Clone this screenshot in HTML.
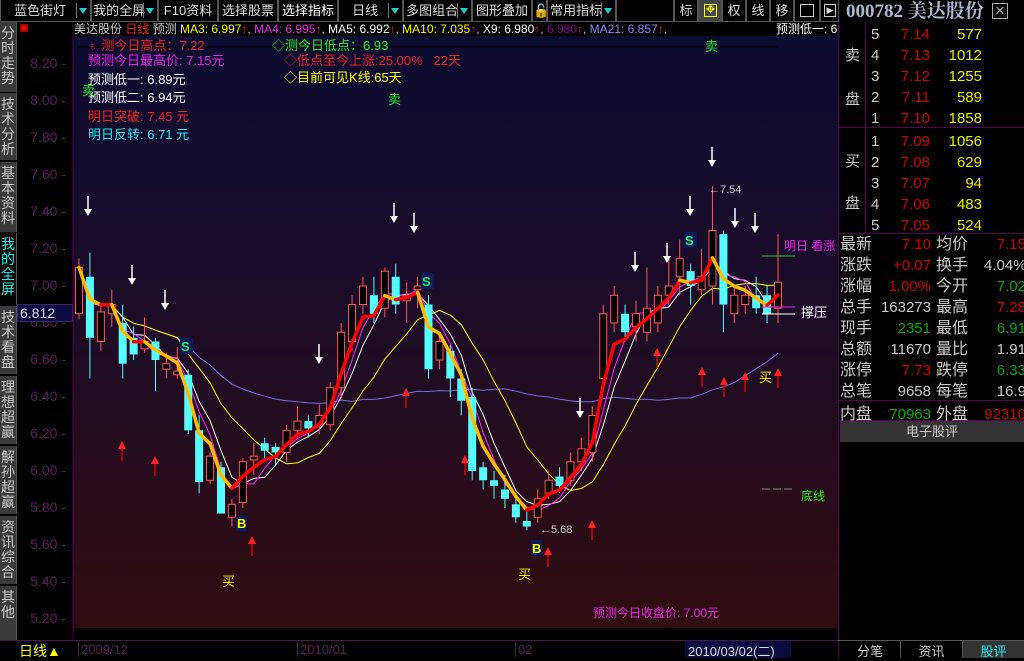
<!DOCTYPE html>
<html><head><meta charset="utf-8">
<style>
*{margin:0;padding:0;box-sizing:border-box}
body{width:1024px;height:658px;background:#000;overflow:hidden;position:relative;font-family:"Liberation Sans","WenQuanYi Zen Hei",sans-serif;font-size:13px;color:#ccc}
.abs{position:absolute}
.tb{position:absolute;top:0;height:22px;border:1px solid #555;border-top:none;background:#000;color:#ddd;font-size:13px;line-height:21px;text-align:center;white-space:nowrap}
.dd{position:absolute;right:2px;top:3px;width:12px;height:15px;border-left:1px solid #777}
.dd:after{content:"";position:absolute;left:2px;top:5px;border-left:4px solid transparent;border-right:4px solid transparent;border-top:6px solid #2cc}
.tab{position:absolute;left:0;width:17px;background:#3a3a3a;border-right:1px solid #555;color:#ccc;font-size:14px;line-height:15px;text-align:center;padding-top:4px}
.ax{position:absolute;left:30px;width:36px;text-align:right;color:#5c1b5c;font-size:14px}
.ob{position:absolute;left:838px;width:186px;height:21px;font-size:15px;line-height:21px}
.ob span{position:absolute}
.it{position:absolute;font-size:13px}
</style></head><body>
<div class="tb" style="left:0;width:91px">蓝色街灯&nbsp;&nbsp;&nbsp;<div class="dd"></div></div>
<div class="tb" style="left:91px;width:67px">我的全屏&nbsp;&nbsp;&nbsp;<div class="dd"></div></div>
<div class="tb" style="left:158px;width:60px">F10资料</div>
<div class="tb" style="left:218px;width:60px">选择股票</div>
<div class="tb" style="left:278px;width:60px;color:#fff">选择指标</div>
<div class="tb" style="left:338px;width:65px">日线&nbsp;&nbsp;&nbsp;<div class="dd"></div></div>
<div class="tb" style="left:403px;width:69px">多图组合&nbsp;&nbsp;&nbsp;<div class="dd"></div></div>
<div class="tb" style="left:472px;width:60px">图形叠加</div>
<div class="tb" style="left:532px;width:15px">&#128275;</div>
<div class="tb" style="left:547px;width:69px">常用指标&nbsp;&nbsp;&nbsp;<div class="dd"></div></div>
<div class="tb" style="left:616px;width:58px"></div>
<div class="tb" style="left:674px;width:24px">标</div>
<div class="tb" style="left:698px;width:24px;background:#444"><div style="position:absolute;left:5px;top:4px;width:13px;height:13px;border:1px solid #ff0;color:#ff0;font-size:11px;line-height:11px">✥</div></div>
<div class="tb" style="left:722px;width:24px">权</div>
<div class="tb" style="left:746px;width:24px">线</div>
<div class="tb" style="left:770px;width:24px">移</div>
<div class="tb" style="left:794px;width:26px"><div style="position:absolute;left:5px;top:4px;width:14px;height:13px;border:1px solid #ccc"></div></div>
<div class="tb" style="left:820px;width:19px"><div style="position:absolute;left:3px;top:4px;width:12px;height:13px;border:1px solid #ccc;font-size:9px;line-height:11px">▶</div></div>
<div class="abs" style="left:846px;top:0;font-family:'Liberation Serif','Noto Serif CJK SC',serif;font-size:19px;font-weight:bold;color:#aab8d0;line-height:24px">000782 美达股份</div>
<div class="abs" style="left:992px;top:3px;width:16px;height:16px;border:1px solid #aaa;color:#aaa;font-size:13px;line-height:14px;text-align:center">✕</div>

<div class="tab" style="top:22px;height:70px">分时走势</div>
<div class="tab" style="top:93px;height:67px">技术分析</div>
<div class="tab" style="top:162px;height:70px">基本资料</div>
<div class="tab" style="top:233px;height:72px;background:#000;color:#2ee">我的全屏</div>
<div class="tab" style="top:306px;height:68px">技术看盘</div>
<div class="tab" style="top:376px;height:68px">理想超赢</div>
<div class="tab" style="top:446px;height:68px">解孙超赢</div>
<div class="tab" style="top:516px;height:68px">资讯综合</div>
<div class="tab" style="top:586px;height:54px">其他</div>
<div class="abs" style="left:20px;top:24px;width:8px;height:8px;background:#f00;border:2px solid #a00"></div>

<div id="axis"></div>
<div class="abs" style="left:17px;top:304px;width:56px;height:18px;background:#0c0c40;border:1px solid #3a2a6a;color:#ddd;font-size:14px;line-height:16px;padding-left:2px">6.812</div>

<svg id="ch" class="abs" style="left:0;top:0" width="838" height="658"></svg>

<div class="abs" style="left:74px;top:22px;width:764px;height:14px;background:#000;font-size:12px;line-height:14px;white-space:nowrap;overflow:hidden;color:#ccc">美达股份 <span style="color:#e22">日线</span> 预测 <span style="color:#ff0">MA3: 6.997</span><span style="color:#e22">↑</span>, <span style="color:#e2e">MA4: 6.995</span><span style="color:#e22">↑</span>, <span style="color:#fff">MA5: 6.992</span><span style="color:#e22">↑</span>, <span style="color:#ff0">MA10: 7.035</span><span style="color:#e22">↑</span>, <span style="color:#fff">X9: 6.980</span><span style="color:#e22">↑</span>, <span style="color:#808">6.980</span><span style="color:#e22">↑</span>, <span style="color:#88f">MA21: 6.857</span><span style="color:#e22">↑</span>,<span style="position:absolute;left:702px;color:#fff;background:#000">预测低一: 6</span></div>

<div class="it" style="left:88px;top:35px;color:#e22">♁ 测今日高点：7.22</div>
<div class="it" style="left:272px;top:35px;color:#2e2">◇测今日低点：6.93</div>
<div class="it" style="left:88px;top:50px;color:#e2e">预测今日最高价: 7.15元</div>
<div class="it" style="left:284px;top:50px;color:#e22">◇低点至今上涨:25.00%&nbsp;&nbsp;&nbsp;22天</div>
<div class="it" style="left:284px;top:67px;color:#ff0">◇目前可见K线:65天</div>
<div class="it" style="left:88px;top:69px;color:#fff">预测低一: 6.89元</div>
<div class="it" style="left:88px;top:87px;color:#fff">预测低二: 6.94元</div>
<div class="it" style="left:88px;top:106px;color:#e22">明日突破: 7.45 元</div>
<div class="it" style="left:88px;top:124px;color:#2ee">明日反转: 6.71 元</div>
<div class="abs" style="left:82px;top:80px;color:#2e2;font-size:13px">卖</div>
<div class="abs" style="left:388px;top:89px;color:#2e2;font-size:13px">卖</div>
<div class="abs" style="left:705px;top:36px;color:#2e2;font-size:13px">卖</div>
<div class="abs" style="left:222px;top:571px;color:#ff0;font-size:13px">买</div>
<div class="abs" style="left:518px;top:564px;color:#ff0;font-size:13px">买</div>
<div class="abs" style="left:759px;top:367px;color:#ff0;font-size:13px">买</div>
<div class="abs" style="left:784px;top:237px;color:#e2e;font-size:12px">明日 看涨</div>
<div class="abs" style="left:801px;top:302px;color:#fff;font-size:13px">撑压</div>
<div class="abs" style="left:801px;top:487px;color:#2e2;font-size:12px">底线</div>
<div class="abs" style="left:593px;top:604px;color:#e2e;font-size:12px">预测今日收盘价: 7.00元</div>
<div class="abs" style="left:709px;top:184px;color:#ccc;font-size:11px">←7.54</div>
<div class="abs" style="left:540px;top:524px;color:#ccc;font-size:11px">←5.68</div>

<div class="abs" style="left:0;top:640px;width:838px;height:18px;background:#000;border-top:1px solid #4a1a4a"></div>
<div class="abs" style="left:19px;top:641px;color:#ff0;font-size:14px">日线▲</div>
<div class="abs" style="left:78px;top:642px;color:#5c1b5c;font-size:13px;border-left:1px solid #4a1a4a;padding-left:2px">2009/12</div>
<div class="abs" style="left:297px;top:642px;color:#5c1b5c;font-size:13px;border-left:1px solid #4a1a4a;padding-left:2px">2010/01</div>
<div class="abs" style="left:515px;top:642px;color:#5c1b5c;font-size:13px;border-left:1px solid #4a1a4a;padding-left:2px">02</div>
<div class="abs" style="left:685px;top:641px;width:106px;height:17px;background:#0c0c40;color:#ddd;font-size:13px;padding-left:3px">2010/03/02(二)</div>

<div class="abs" style="left:838px;top:22px;width:1px;height:636px;background:#505"></div>
<div class="abs" style="left:865px;top:22px;width:1px;height:212px;background:#505"></div>
<div class="abs" style="left:838px;top:127px;width:186px;height:1px;background:#505"></div>
<div class="abs" style="left:838px;top:233px;width:186px;height:1px;background:#505"></div>
<div class="abs" style="left:838px;top:400px;width:186px;height:1px;background:#505"></div>
<div class="abs" style="left:838px;top:420px;width:186px;height:1px;background:#505"></div>
<div class="abs" style="left:845px;top:44px;font-size:15px;color:#ccc">卖</div>
<div class="abs" style="left:845px;top:88px;font-size:15px;color:#ccc">盘</div>
<div class="abs" style="left:845px;top:150px;font-size:15px;color:#ccc">买</div>
<div class="abs" style="left:845px;top:192px;font-size:15px;color:#ccc">盘</div>
<div id="book"></div>
<div id="stats"></div>
<div class="abs" style="left:840px;top:421px;width:184px;height:21px;background:#333;color:#ccc;text-align:center;line-height:21px;font-size:13px">电子股评</div>
<div class="abs" style="left:838px;top:640px;width:186px;height:18px;border-top:1px solid #555"></div>
<div class="abs" style="left:840px;top:641px;width:61px;height:17px;color:#ccc;text-align:center;border-right:1px solid #555">分笔</div>
<div class="abs" style="left:901px;top:641px;width:62px;height:17px;color:#ccc;text-align:center;border-right:1px solid #555">资讯</div>
<div class="abs" style="left:963px;top:641px;width:61px;height:17px;color:#2ee;text-align:center;background:#333">股评</div>

<script>
var ax='';var labs=['8.20','8.00','7.80','7.60','7.40','7.20','7.00','6.80','6.60','6.40','6.20','6.00','5.80','5.60','5.40','5.20'];
function Y(p){return 64+(8.2-p)/0.2*37;}
labs.forEach(function(l){var y=Y(parseFloat(l));ax+='<div class="ax" style="top:'+(y-9)+'px">'+l+' -</div>';});
document.getElementById('axis').innerHTML=ax;
var D=[[6.85,7.10,7.15,6.82],[7.05,6.72,7.18,6.50],[6.70,6.86,6.90,6.65],[6.85,6.90,6.98,6.78],[6.80,6.58,6.90,6.50],[6.72,6.63,6.78,6.60],[6.66,6.70,6.83,6.64],[6.70,6.60,6.72,6.43],[6.55,6.58,6.64,6.50],[6.52,6.54,6.67,6.50],[6.52,6.22,6.55,6.20],[6.22,5.94,6.30,5.88],[5.95,6.08,6.10,5.93],[6.02,5.77,6.05,5.77],[5.75,5.82,5.85,5.70],[5.83,6.05,6.07,5.80],[6.06,6.08,6.15,5.98],[6.15,6.11,6.18,6.06],[6.13,6.10,6.15,6.03],[6.10,6.22,6.25,6.05],[6.22,6.27,6.35,6.18],[6.27,6.23,6.30,6.18],[6.25,6.30,6.36,6.20],[6.25,6.45,6.48,6.22],[6.45,6.75,6.80,6.40],[6.70,6.90,6.95,6.65],[6.90,7.00,7.05,6.85],[6.95,6.85,7.05,6.80],[6.88,7.08,7.10,6.83],[7.05,6.90,7.12,6.85],[6.92,6.95,7.02,6.80],[6.98,7.00,7.05,6.88],[6.90,6.55,6.95,6.50],[6.60,6.70,6.75,6.55],[6.65,6.50,6.68,6.40],[6.50,6.38,6.55,6.30],[6.40,6.00,6.45,5.95],[6.02,5.95,6.05,5.90],[5.95,5.92,6.00,5.85],[5.90,5.85,5.98,5.80],[5.82,5.75,5.88,5.72],[5.73,5.70,5.78,5.68],[5.75,5.85,5.90,5.72],[5.88,5.95,6.00,5.85],[5.97,5.92,6.02,5.88],[5.95,6.05,6.10,5.92],[6.05,6.12,6.18,6.00],[6.10,6.30,6.35,6.05],[6.50,6.85,6.90,6.45],[6.80,6.95,7.00,6.75],[6.85,6.75,6.90,6.70],[6.78,6.85,6.92,6.70],[6.75,6.88,7.10,6.70],[6.80,6.95,7.00,6.75],[6.95,7.00,7.15,6.90],[7.05,7.15,7.25,6.95],[7.08,7.00,7.12,6.90],[6.98,7.05,7.20,6.95],[7.00,7.30,7.54,6.90],[7.28,6.90,7.30,6.75],[6.85,6.95,7.00,6.80],[6.90,6.95,7.00,6.85],[6.95,6.88,7.05,6.85],[6.95,6.85,7.00,6.80],[6.88,7.02,7.28,6.80]];
var n=D.length,sp=(778-79)/(n-1);function X(i){return 79+i*sp;}
var s='<defs><linearGradient id="g" x1="0" y1="0" x2="0" y2="1"><stop offset="0" stop-color="#0c0b30"/><stop offset="0.45" stop-color="#1c0c28"/><stop offset="1" stop-color="#300c10"/></linearGradient></defs>';
s+='<rect x="73" y="36" width="765" height="592" fill="url(#g)"/>';
s+='<line x1="73" y1="36" x2="73" y2="640" stroke="#505" />';
s+='<line x1="78" y1="47" x2="778" y2="47" stroke="#000"/>';
var C=D.map(function(d){return d[1]});
function ma(k){return C.map(function(c,i){var a=0,m=0;for(var j=Math.max(0,i-k+1);j<=i;j++){a+=C[j];m++;}return a/m;});}
function poly(arr,col,w){var p='';for(var i=0;i<n;i++)p+=X(i).toFixed(1)+','+Y(arr[i]).toFixed(1)+' ';return '<polyline points="'+p+'" fill="none" stroke="'+col+'" stroke-width="'+w+'"/>';}
s+=poly(ma(25),'#7a6ae0',1);
s+=poly(ma(10),'#ff0',1);
s+=poly(ma(5),'#fff',1);
s+=poly(ma(4),'#f2f',1);
D.forEach(function(d,i){var x=X(i),o=d[0],c=d[1],h=d[2],l=d[3];var up=c>=o;var col=up?'#f55':'#5ff';
s+='<line x1="'+x+'" y1="'+Y(h)+'" x2="'+x+'" y2="'+Y(l)+'" stroke="'+col+'"/>';
var t=Y(Math.max(o,c)),b=Y(Math.min(o,c));if(b-t<2)b=t+2;
if(up)s+='<rect x="'+(x-3.5)+'" y="'+t+'" width="7" height="'+(b-t)+'" fill="#000" stroke="#f55"/>';
else s+='<rect x="'+(x-4)+'" y="'+t+'" width="8" height="'+(b-t)+'" fill="#5ff"/>';});
var e=[];C.forEach(function(c,i){e.push(i?e[i-1]*0.55+c*0.45:c);});
for(var i=1;i<n;i++){var col=e[i]>=e[i-1]?'#f00':'#fb0';s+='<line x1="'+X(i-1)+'" y1="'+Y(e[i-1])+'" x2="'+X(i)+'" y2="'+Y(e[i])+'" stroke="'+col+'" stroke-width="3.5" stroke-linecap="round"/>';}
function dn(x,y){return '<line x1="'+x+'" y1="'+y+'" x2="'+x+'" y2="'+(y+18)+'" stroke="#fff" stroke-width="1.5"/><path d="M'+(x-4)+' '+(y+13)+'L'+x+' '+(y+20)+'L'+(x+4)+' '+(y+13)+'Z" fill="#fff"/>';}
function upA(x,y){return '<line x1="'+x+'" y1="'+(y+4)+'" x2="'+x+'" y2="'+(y+20)+'" stroke="#d00" stroke-width="1.5"/><path d="M'+(x-4)+' '+(y+8)+'L'+x+' '+y+'L'+(x+4)+' '+(y+8)+'Z" fill="#f22"/>';}
[[88,196],[132,265],[165,290],[319,344],[394,203],[414,213],[580,398],[635,252],[667,243],[690,196],[712,147],[735,208],[755,213]].forEach(function(a){s+=dn(a[0],a[1]);});
[[122,441],[155,456],[252,536],[406,388],[465,455],[548,547],[592,520],[657,348],[702,367],[724,377],[745,372],[778,368]].forEach(function(a){s+=upA(a[0],a[1]);});
s+='<rect x="180" y="338" width="13" height="16" fill="#0a1a5a"/><text x="181" y="351" fill="#2e6" font-size="13" font-weight="bold" font-family="Liberation Sans">S</text>';
s+='<rect x="421" y="273" width="13" height="16" fill="#0a1a5a"/><text x="422" y="286" fill="#2e6" font-size="13" font-weight="bold" font-family="Liberation Sans">S</text>';
s+='<rect x="684" y="232" width="13" height="16" fill="#0a1a5a"/><text x="685" y="245" fill="#2e6" font-size="13" font-weight="bold" font-family="Liberation Sans">S</text>';
s+='<rect x="236" y="515" width="11" height="16" fill="#0a1a5a"/><text x="237" y="528" fill="#ff0" font-size="13" font-weight="bold" font-family="Liberation Sans">B</text>';
s+='<rect x="531" y="540" width="11" height="16" fill="#0a1a5a"/><text x="532" y="553" fill="#ff0" font-size="13" font-weight="bold" font-family="Liberation Sans">B</text>';
s+='<line x1="762" y1="256" x2="795" y2="256" stroke="#2c2"/><line x1="762" y1="307" x2="795" y2="307" stroke="#e2e"/><line x1="762" y1="314" x2="795" y2="314" stroke="#fff"/><line x1="762" y1="489" x2="795" y2="489" stroke="#888" stroke-dasharray="8,3"/>';
document.getElementById('ch').innerHTML=s;
var bk=[[5,'7.14','577'],[4,'7.13','1012'],[3,'7.12','1255'],[2,'7.11','589'],[1,'7.10','1858'],[1,'7.09','1056'],[2,'7.08','629'],[3,'7.07','94'],[4,'7.06','483'],[5,'7.05','524']];
var h='';bk.forEach(function(b,i){var t=24+i*21+(i>4?2:0);h+='<div class="ob" style="top:'+t+'px"><span style="left:33px;color:#ccc">'+b[0]+'</span><span style="right:94px;color:#c00">'+b[1]+'</span><span style="right:42px;color:#ee0">'+b[2]+'</span></div>';});
document.getElementById('book').innerHTML=h;
var st=[['最新','7.10','#c00','均价','7.15','#c00'],['涨跌','+0.07','#c00','换手','4.04%','#ccc'],['涨幅','1.00%','#c00','今开','7.02','#0a0'],['总手','163273','#ccc','最高','7.28','#c00'],['现手','2351','#0a0','最低','6.91','#0a0'],['总额','11670','#ccc','量比','1.91','#ccc'],['涨停','7.73','#c00','跌停','6.33','#0a0'],['总笔','9658','#ccc','每笔','16.9','#ccc'],['内盘','70963','#0a0','外盘','92310','#c00']];
h='';st.forEach(function(r,i){var t=234+i*21+(i==8?2:0);h+='<div class="ob" style="top:'+t+'px"><span style="left:2px;color:#ccc;font-size:16px">'+r[0]+'</span><span style="right:93px;color:'+r[2]+'">'+r[1]+'</span><span style="left:98px;color:#ccc;font-size:16px">'+r[3]+'</span><span style="left:146px;width:42px;color:'+r[5]+';white-space:nowrap;overflow:hidden;text-align:right">'+r[4]+'</span></div>';});
document.getElementById('stats').innerHTML=h;
</script>
</body></html>
